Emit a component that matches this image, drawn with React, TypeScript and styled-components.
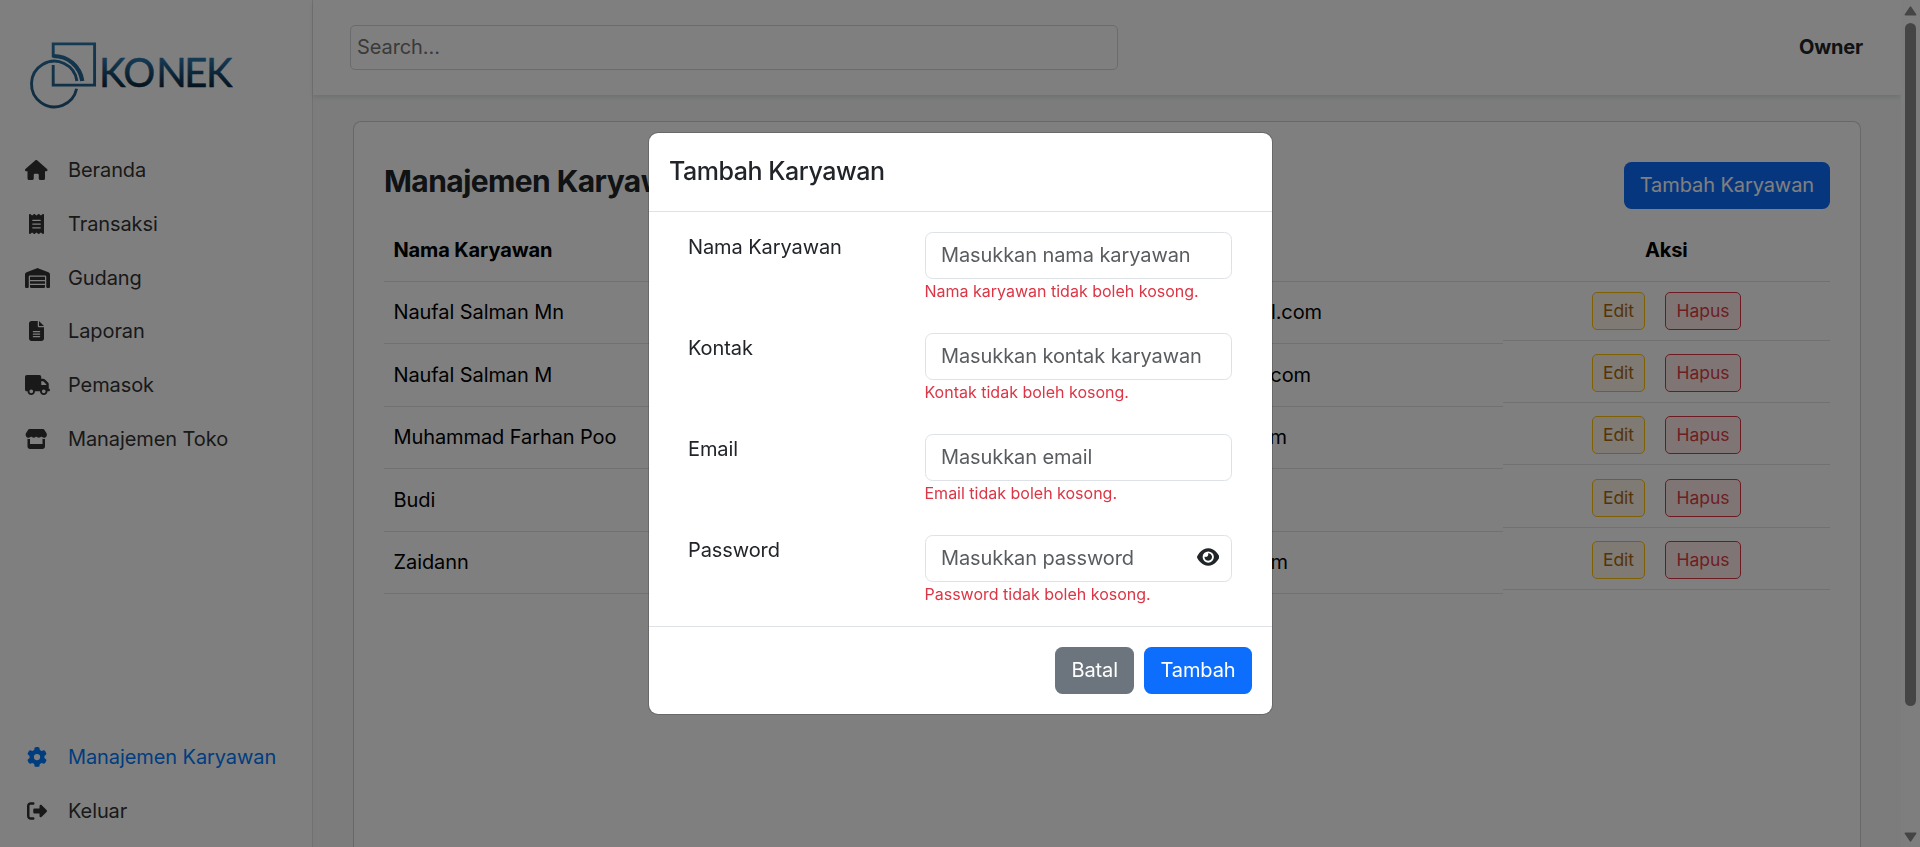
import React from "react";
import styled, { createGlobalStyle } from "styled-components";
import {
  FaHouse,
  FaReceipt,
  FaWarehouse,
  FaFileLines,
  FaTruck,
  FaStore,
  FaGear,
  FaRightFromBracket,
  FaEye,
} from "react-icons/fa6";
import type { IconType } from "react-icons";

const GlobalStyle = createGlobalStyle`
  *, *::before, *::after { box-sizing: border-box; }
  html, body { margin: 0; padding: 0; overflow: hidden; }
  body {
    font-family: Inter, "Liberation Sans", sans-serif;
    font-size: 20px;
    line-height: 30px;
    letter-spacing: -0.09px;
    color: #212529;
    background: #fff;
  }
  h2, h5, p { margin: 0; }
  button, input { font: inherit; letter-spacing: inherit; margin: 0; }
`;

const Page = styled.div`
  display: flex;
  height: 847px;
  overflow: hidden;
`;

const Sidebar = styled.aside`
  display: flex;
  flex-direction: column;
  width: 313px;
  flex: none;
  padding-bottom: 9px;
  border-right: 1px solid #dee2e6;
  background: #fff;
`;

const LogoBox = styled.div`
  height: 143.25px;
  padding: 38px 0 0 27px;
  svg { display: block; }
`;

const NavGroup = styled.nav<{ $bottom?: boolean }>`
  display: flex;
  flex-direction: column;
  margin-top: ${(p) => (p.$bottom ? "auto" : "0")};
`;

const NavItem = styled.a<{ $active?: boolean }>`
  display: flex;
  align-items: center;
  height: 53.75px;
  padding-left: 25px;
  color: ${(p) => (p.$active ? "#007bff" : "#333")};
  text-decoration: none;
`;

const NavIcon = styled.span<{ $width: number }>`
  display: flex;
  justify-content: ${(p) => (p.$width > 23 ? "flex-start" : "center")};
  width: 23px;
  margin-right: 20px;
  svg {
    flex: none;
    width: ${(p) => p.$width}px;
    height: 20px;
  }
`;

const Main = styled.main`
  display: flex;
  flex-direction: column;
  flex: 1;
  background: #f8f9fa;
`;

const TopBar = styled.header`
  display: flex;
  align-items: center;
  justify-content: space-between;
  flex: none;
  height: 95px;
  padding: 0 38px 0 37px;
  background: #fff;
  box-shadow: 0 2.5px 5px rgba(0, 0, 0, 0.1);
`;

const SearchInput = styled.input`
  width: 768px;
  height: 45px;
  padding: 0 6px 2px;
  border: 1px solid #d3d6d9;
  border-radius: 5px;
  background: #fff;
  &::placeholder { color: #757575; opacity: 1; }
`;

const Owner = styled.span`
  padding-bottom: 1px;
  font-weight: 700;
  letter-spacing: -0.2px;
`;

const Card = styled.section`
  flex: 1;
  margin: 26px 40px 0;
  padding: 40px 30px 0;
  border: 1px solid #cfd0d1;
  border-bottom: 0;
  border-radius: 8px 8px 0 0;
  background: #fff;
`;

const CardHead = styled.div`
  display: flex;
  align-items: flex-start;
  justify-content: space-between;
  height: 57px;
`;

const Title = styled.h2`
  margin-top: 1px;
  font-size: 30px;
  line-height: 36px;
  font-weight: 700;
  letter-spacing: -0.58px;
`;

const Button = styled.button<{ $variant?: "secondary" }>`
  height: 47px;
  padding: 0 16px 2px;
  border: 0;
  border-radius: 7.5px;
  color: #fff;
  background: ${(p) => (p.$variant === "secondary" ? "#6c757d" : "#0d6efd")};
`;

const Row = styled.div`
  display: grid;
  grid-template-columns: 400px 300px 419px 327px;
  height: 62px;
  color: #000;
  &:nth-child(even) { height: 63px; }
`;

const HeadRow = styled(Row)`
  height: 63px;
  font-weight: 700;
  letter-spacing: -0.12px;
`;

const Cell = styled.div`
  display: flex;
  align-items: center;
  padding: 0 10px 1px 9.5px;
  border-bottom: 1px solid #dee2e6;
`;

const CenterHead = styled(Cell)`
  justify-content: center;
`;

const EmailCell = styled(Cell)<{ $inset: number }>`
  justify-content: flex-end;
  padding-right: ${(p) => p.$inset}px;
`;

const ActionCell = styled(Cell)`
  justify-content: center;
  gap: 20px;
  height: 59px;
  padding: 0 10px;
  ${Row}:nth-child(odd):not(:first-child) & { margin-top: -1px; }
`;

const ActionButton = styled.button<{ $danger?: boolean }>`
  width: ${(p) => (p.$danger ? 76 : 53)}px;
  height: 38px;
  padding: 0;
  border: 1px solid ${(p) => (p.$danger ? "#dc3545" : "#ffc107")};
  border-radius: 5px;
  font-size: 17.5px;
  letter-spacing: 0;
  color: ${(p) => (p.$danger ? "#dc3f45" : "#a8690f")};
  background: ${(p) => (p.$danger ? "#ffebeb" : "#fff5e6")};
`;

const ScrollTrack = styled.div`
  display: flex;
  flex-direction: column;
  align-items: center;
  flex: none;
  width: 19px;
  padding: 6px 0 5px;
  background: #fcfcfc;
  svg { display: block; }
`;

const ScrollThumb = styled.div`
  width: 11px;
  height: 683px;
  margin: 7px 0 auto;
  border-radius: 6px;
  background: #8b8b8b;
`;

const Backdrop = styled.div`
  position: fixed;
  inset: 0;
  display: flex;
  justify-content: center;
  align-items: flex-start;
  padding: 132px 0 0 1px;
  background: rgba(0, 0, 0, 0.5);
`;

const Dialog = styled.div`
  width: 625px;
  height: 583px;
  border: 1px solid rgba(0, 0, 0, 0.175);
  border-radius: 10px;
  background: #fff;
  background-clip: padding-box;
`;

const DialogHead = styled.div`
  display: flex;
  align-items: center;
  height: 79px;
  padding: 0 20px 1px;
  border-bottom: 1px solid #dee2e6;
`;

const DialogTitle = styled.h5`
  font-size: 25px;
  line-height: 37.5px;
  font-weight: 500;
  letter-spacing: -0.45px;
`;

const DialogBody = styled.div`
  height: 414px;
  padding: 20px 40px 0 39px;
`;

const Field = styled.div`
  display: grid;
  grid-template-columns: 237px 307px;
  height: 101px;
`;

const Control = styled.div`
  position: relative;
`;

const TextInput = styled.input`
  display: block;
  width: 100%;
  height: 47px;
  padding: 0 15px 2px;
  border: 1px solid #dee2e6;
  border-radius: 7.5px;
  background: #fff;
  &::placeholder { color: rgba(33, 37, 41, 0.75); opacity: 1; }
`;

const ErrorText = styled.p`
  margin-left: -0.5px;
  font-size: 16px;
  line-height: 24px;
  letter-spacing: 0;
  color: #dc3545;
`;

const EyeToggle = styled.span`
  position: absolute;
  top: 11.5px;
  right: 13px;
  svg { display: block; height: 20px; width: 22.5px; }
`;

const DialogFoot = styled.div`
  display: flex;
  justify-content: flex-end;
  gap: 10px;
  padding: 20px 20px 0;
  border-top: 1px solid #dee2e6;
`;

const SubmitButton = styled(Button)`
  width: 108px;
`;

type MenuEntry = { label: string; icon: IconType; width: number; active?: boolean };

const menu: MenuEntry[] = [
  { label: "Beranda", icon: FaHouse, width: 22.5 },
  { label: "Transaksi", icon: FaReceipt, width: 15 },
  { label: "Gudang", icon: FaWarehouse, width: 25 },
  { label: "Laporan", icon: FaFileLines, width: 15 },
  { label: "Pemasok", icon: FaTruck, width: 25 },
  { label: "Manajemen Toko", icon: FaStore, width: 22.5 },
];

const bottomMenu: MenuEntry[] = [
  { label: "Manajemen Karyawan", icon: FaGear, width: 20, active: true },
  { label: "Keluar", icon: FaRightFromBracket, width: 20 },
];

const employees = [
  { name: "Naufal Salman Mn", email: "naufal@gmail.com", inset: 181 },
  { name: "Naufal Salman M", email: "salman@mail.com", inset: 192 },
  { name: "Muhammad Farhan Poo", email: "farhan@mail.com", inset: 216 },
  { name: "Budi", email: "budi@mail.com", inset: 240 },
  { name: "Zaidann", email: "zaidan@mail.com", inset: 215 },
];

const fields = [
  { label: "Nama Karyawan", hint: "Masukkan nama karyawan", error: "Nama karyawan tidak boleh kosong." },
  { label: "Kontak", hint: "Masukkan kontak karyawan", error: "Kontak tidak boleh kosong." },
  { label: "Email", hint: "Masukkan email", error: "Email tidak boleh kosong." },
  { label: "Password", hint: "Masukkan password", error: "Password tidak boleh kosong.", secret: true },
];

const Logo = () => (
  <svg width="210" height="74" viewBox="27 38 210 74" fill="none">
    <defs>
      <linearGradient id="mark" gradientUnits="userSpaceOnUse" x1="0" y1="42" x2="0" y2="108">
        <stop offset="0" stopColor="#2a75a6" />
        <stop offset="1" stopColor="#1f5880" />
      </linearGradient>
      <linearGradient id="word" gradientUnits="userSpaceOnUse" x1="0" y1="58" x2="0" y2="87">
        <stop offset="0" stopColor="#2b78ab" />
        <stop offset="1" stopColor="#08263d" />
      </linearGradient>
    </defs>
    <g stroke="url(#mark)" strokeWidth="2.9">
      <path d="M53.2 57.5V43.9H94.6V85.1H53.2V65" />
      <path d="M76.9 81A22.8 22.8 0 1 0 76.6 88.8" />
      <path d="M53.2 56C68 56 80 66 82.3 81" strokeWidth="4.2" />
    </g>
    <text
      x="99 123.2 156.2 184.2 206"
      y="87"
      fill="url(#word)"
      stroke="url(#word)"
      strokeWidth="0.5"
      fontFamily="Lato, sans-serif"
      fontSize="40"
    >
      KONEK
    </text>
  </svg>
);

const MenuLink = ({ label, icon: Icon, width, active }: MenuEntry) => (
  <NavItem $active={active}>
    <NavIcon $width={width}>
      <Icon />
    </NavIcon>
    {label}
  </NavItem>
);

export default function App() {
  return (
    <>
      <GlobalStyle />
      <Page>
        <Sidebar>
          <LogoBox>
            <Logo />
          </LogoBox>
          <NavGroup>
            {menu.map((m) => (
              <MenuLink key={m.label} {...m} />
            ))}
          </NavGroup>
          <NavGroup $bottom>
            {bottomMenu.map((m) => (
              <MenuLink key={m.label} {...m} />
            ))}
          </NavGroup>
        </Sidebar>
        <Main>
          <TopBar>
            <SearchInput placeholder="Search..." />
            <Owner>Owner</Owner>
          </TopBar>
          <Card>
            <CardHead>
              <Title>Manajemen Karyawan</Title>
              <Button>Tambah Karyawan</Button>
            </CardHead>
            <HeadRow>
              <Cell>Nama Karyawan</Cell>
              <Cell>Kontak</Cell>
              <Cell>Email</Cell>
              <CenterHead>Aksi</CenterHead>
            </HeadRow>
            <div>
              {employees.map((e) => (
                <Row key={e.name}>
                  <Cell>{e.name}</Cell>
                  <Cell />
                  <EmailCell $inset={e.inset}>{e.email}</EmailCell>
                  <ActionCell>
                    <ActionButton>Edit</ActionButton>
                    <ActionButton $danger>Hapus</ActionButton>
                  </ActionCell>
                </Row>
              ))}
            </div>
          </Card>
        </Main>
        <ScrollTrack>
          <svg width="13" height="10" viewBox="0 0 13 10">
            <path d="M6.5 1.2 11.6 8.8H1.4Z" fill="#8b8b8b" stroke="#8b8b8b" strokeWidth="1.6" strokeLinejoin="round" />
          </svg>
          <ScrollThumb />
          <svg width="13" height="10" viewBox="0 0 13 10">
            <path d="M6.5 8.8 11.6 1.2H1.4Z" fill="#8b8b8b" stroke="#8b8b8b" strokeWidth="1.6" strokeLinejoin="round" />
          </svg>
        </ScrollTrack>
      </Page>
      <Backdrop>
        <Dialog role="dialog">
          <DialogHead>
            <DialogTitle>Tambah Karyawan</DialogTitle>
          </DialogHead>
          <DialogBody>
            {fields.map((f) => (
              <Field key={f.label}>
                <label>{f.label}</label>
                <Control>
                  <TextInput type={f.secret ? "password" : "text"} placeholder={f.hint} />
                  {f.secret && (
                    <EyeToggle>
                      <FaEye />
                    </EyeToggle>
                  )}
                  <ErrorText>{f.error}</ErrorText>
                </Control>
              </Field>
            ))}
          </DialogBody>
          <DialogFoot>
            <Button $variant="secondary">Batal</Button>
            <SubmitButton>Tambah</SubmitButton>
          </DialogFoot>
        </Dialog>
      </Backdrop>
    </>
  );
}
